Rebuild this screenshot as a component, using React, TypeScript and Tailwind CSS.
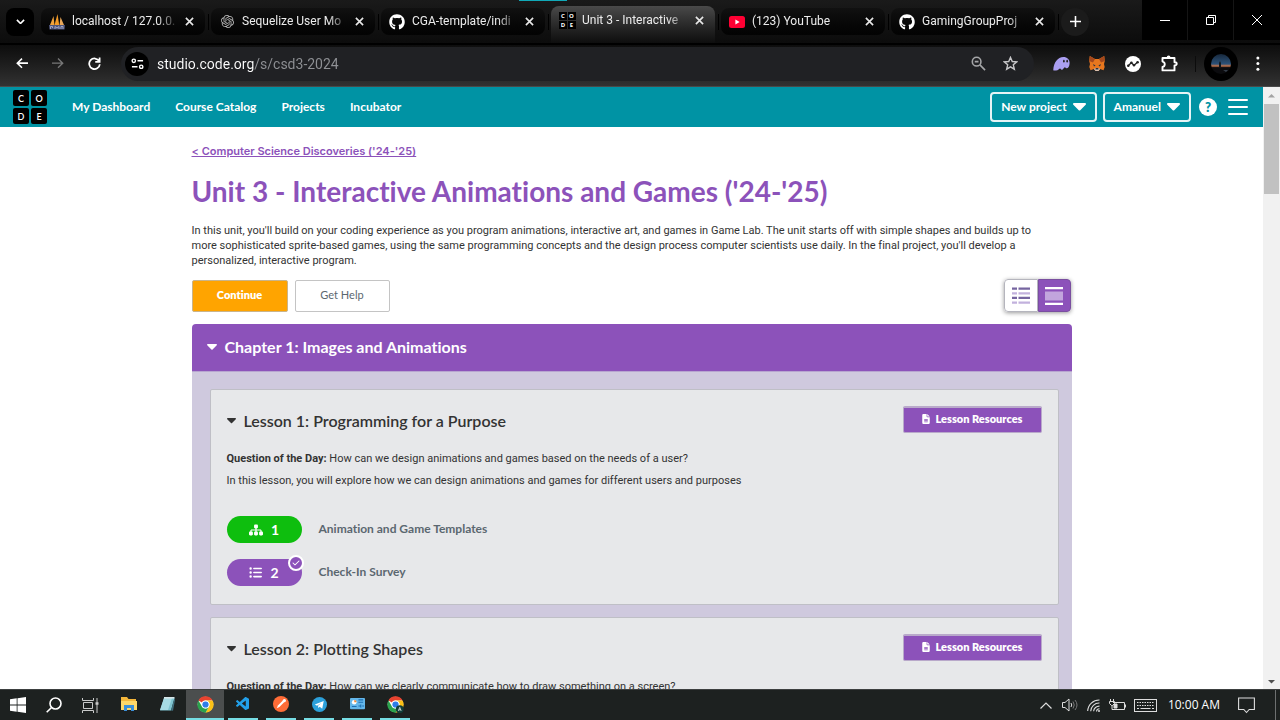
import type { ReactNode } from "react";
import { FaCheck, FaFileLines, FaGithub, FaListUl, FaSitemap } from "react-icons/fa6";
import { SiOpenai } from "react-icons/si";
import { VscVscode } from "react-icons/vsc";

const Caret = ({ className }: { className: string }) => (
  <svg viewBox="0 0 12 7" className={className} fill="currentColor" aria-hidden="true">
    <path d="M1 0h10c.9 0 1.300 1 .7 1.600L6.700 6.600a1 1 0 0 1-1.400 0L.3 1.600C-.3 1 .1 0 1 0z" />
  </svg>
);

const CloseIcon = () => (
  <svg viewBox="0 0 10 10" className="size-[9px]" stroke="#e8e8e8" strokeWidth="1.800" aria-hidden="true">
    <path d="M1 1l8 8M9 1L1 9" />
  </svg>
);

const PhpMyAdminIcon = () => (
  <svg viewBox="0 0 16 16" className="size-4" aria-hidden="true">
    <path d="M1 11L4.500 2l1 9z" fill="#f0a23c" />
    <path d="M5.500 11L8.500 0l1.700 11z" fill="#f39b27" />
    <path d="M10.500 11L11.500 3l3.500 8z" fill="#e9a85a" />
    <path d="M0 11h16l-.5 4.500H.5z" fill="#4e557c" />
    <path d="M1.500 15v-2.500h2V14M6 15v-2.500l2 1.500 2-1.500V15M12 15v-2.500h2V15" fill="none" stroke="#a7adcb" strokeWidth=".9" />
  </svg>
);

const YoutubeIcon = () => (
  <svg viewBox="0 0 16 12" className="h-3 w-4" aria-hidden="true">
    <rect width="16" height="12" rx="2.500" fill="#ff0033" />
    <path d="M6.400 3.500v5l4.200-2.500z" fill="#fff" />
  </svg>
);

const ChromeIcon = ({ badge }: { badge?: boolean }) => (
  <svg viewBox="0 0 48 48" className="size-[17px]" aria-hidden="true">
    <circle cx="24" cy="24" r="22" fill="#fff" />
    <path d="M24 1a23 23 0 0 1 19.900 11.500H24A11.500 11.500 0 0 0 14 18.200L4.100 12.500A23 23 0 0 1 24 1z" fill="#e8432f" />
    <path d="M43.900 12.500A23 23 0 0 1 24 47l10-17.200a11.500 11.500 0 0 0 0-11.600l-10-5.700z" fill="#fbc116" />
    <path d="M4.100 12.500A23 23 0 0 0 24 47l10-17.200A11.500 11.500 0 0 1 14 29.800z" fill="#2ba24c" />
    <circle cx="24" cy="24" r="11" fill="#fff" />
    <circle cx="24" cy="24" r="8.800" fill="#2f7de9" />
    {badge && (
      <>
        <circle cx="36" cy="37" r="11" fill="#123f3a" />
        <path d="M32 42l4-10 4 10M33.500 39h5" stroke="#fff" strokeWidth="2" fill="none" />
      </>
    )}
  </svg>
);

const CodeLogo = ({ small }: { small?: boolean }) => (
  <span className={small ? "grid grid-cols-2 gap-px" : "grid grid-cols-2 gap-[2px]"}>
    {["C", "O", "D", "E"].map((c) => (
      <span
        key={c}
        className={
          small
            ? "flex size-[8px] items-center justify-center bg-black text-[6px] leading-none font-bold text-white"
            : "flex size-4 items-center justify-center rounded-[2px] bg-black text-[9px] leading-none font-semibold text-white"
        }
      >
        {c}
      </span>
    ))}
  </span>
);

const tabs: { title: string; icon: ReactNode; active?: boolean }[] = [
  { title: "localhost / 127.0.0.", icon: <PhpMyAdminIcon /> },
  { title: "Sequelize User Mo", icon: <SiOpenai className="size-[13px] text-[#b9b9b9]" /> },
  { title: "CGA-template/indi", icon: <FaGithub className="size-4 text-white" /> },
  { title: "Unit 3 - Interactive", icon: <CodeLogo small />, active: true },
  { title: "(123) YouTube", icon: <YoutubeIcon /> },
  { title: "GamingGroupProj", icon: <FaGithub className="size-4 text-white" /> },
];

function TabStrip() {
  return (
    <div className="relative flex h-[43px] shrink-0 bg-linear-to-b from-[#1a1a1a] to-[#0c0c0c]">
      <span className="absolute top-0 left-[519px] h-px w-12 bg-[#11a9b8]" />
      <div className="flex min-w-0 flex-1 items-center pl-[6px]">
        <button aria-label="Search tabs" className="mr-[7px] flex h-7 w-7 items-center justify-center rounded-lg bg-black">
          <svg viewBox="0 0 10 6" className="w-[9px]" fill="none" stroke="#fff" strokeWidth="1.800">
            <path d="M1 1l4 4 4-4" />
          </svg>
        </button>
        {tabs.map((t) => (
          <div key={t.title} className="flex w-[170px] min-w-0 items-center">
            <div
              className={
                t.active
                  ? "mt-[6px] flex h-[37px] w-[164px] items-start rounded-t-lg bg-linear-to-b from-[#4a4a4a] to-[#0e0e0e] px-2 pt-[6px]"
                  : "flex h-[27px] w-[164px] items-center rounded-lg bg-linear-to-b from-[#111] to-[#030303] px-2"
              }
            >
              <span className="flex h-[17px] w-4 shrink-0 items-center justify-center">{t.icon}</span>
              <span className="ml-[7px] w-[109px] overflow-hidden mask-r-from-80% mask-r-to-100% font-['Roboto',sans-serif] text-[12px] leading-[17px] whitespace-nowrap text-[#ececec]">
                {t.title}
              </span>
              <button aria-label={"Close " + t.title} className="ml-[2px] flex size-4 shrink-0 items-center justify-center">
                <CloseIcon />
              </button>
            </div>
            <span className="ml-[3px] h-4 w-px bg-black" />
          </div>
        ))}
        <button aria-label="New tab" className="flex size-7 items-center justify-center rounded-full bg-[#1b1b1b]">
          <svg viewBox="0 0 12 12" className="size-[11px]" stroke="#fff" strokeWidth="1.700">
            <path d="M6 0v12M0 6h12" />
          </svg>
        </button>
      </div>
      <div className="flex h-10">
        <button aria-label="Minimize" className="flex w-[46px] items-center justify-center border-r border-[#151515] bg-black">
          <span className="h-px w-[10px] bg-white" />
        </button>
        <button aria-label="Restore" className="flex w-[46px] items-center justify-center border-r border-[#151515] bg-black">
          <svg viewBox="0 0 10 10" className="size-[10px]" fill="none" stroke="#fff">
            <path d="M.5 2.500h7v7h-7zM2.500 2.500v-2h7v7h-2" />
          </svg>
        </button>
        <button aria-label="Close window" className="flex w-[46px] items-center justify-center bg-black">
          <svg viewBox="0 0 10 10" className="size-[10px]" stroke="#fff">
            <path d="M0 0l10 10M10 0L0 10" />
          </svg>
        </button>
      </div>
    </div>
  );
}

const NavButton = ({ label, children }: { label: string; children: ReactNode }) => (
  <button aria-label={label} className="flex size-9 shrink-0 items-center justify-center">
    {children}
  </button>
);

function Toolbar() {
  return (
    <div className="flex h-11 shrink-0 items-center border-t-2 border-b border-t-black border-b-[#4a4a4a] bg-linear-to-b from-[#0d0d0d] to-[#323232] pb-1 pl-1">
      <NavButton label="Back">
        <svg viewBox="0 0 14 12" className="w-3" fill="none" stroke="#fff" strokeWidth="1.800">
          <path d="M7 .7L1.500 6 7 11.300M1.500 6H14" />
        </svg>
      </NavButton>
      <NavButton label="Forward">
        <svg viewBox="0 0 14 12" className="w-3" fill="none" stroke="#777" strokeWidth="1.600">
          <path d="M7 .7L12.500 6 7 11.300M12.500 6H0" />
        </svg>
      </NavButton>
      <NavButton label="Reload">
        <svg viewBox="0 0 14 14" className="size-[13px]" fill="none" stroke="#fff" strokeWidth="1.900">
          <path d="M12 4.500A5.700 5.700 0 1 0 12.700 7.800M12.500 .5v4.700H7.800" />
        </svg>
      </NavButton>
      <div className="ml-[9px] flex h-[34px] min-w-0 flex-1 items-center rounded-full bg-[#202124] pr-4 pl-1">
        <button aria-label="View site information" className="flex size-6 shrink-0 items-center justify-center rounded-full bg-black">
          <svg viewBox="0 0 14 12" className="w-[13px]" fill="none" stroke="#fff" strokeWidth="1.500">
            <circle cx="3" cy="3" r="1.800" />
            <path d="M7 3h6M1 9.500h6" />
            <circle cx="11" cy="9.500" r="1.800" />
          </svg>
        </button>
        <input
          aria-label="Address"
          defaultValue="studio.code.org/s/csd3-2024"
          className="ml-2 h-6 min-w-0 flex-1 bg-[linear-gradient(90deg,#ffffff_97px,#8f9195_97px)] bg-clip-text font-['Roboto',sans-serif] text-[14px] text-transparent outline-none"
        />
        <button aria-label="Zoom" className="mr-4 flex w-4 justify-center">
          <svg viewBox="0 0 16 16" className="size-[15px]" fill="none" stroke="#a5a6a8" strokeWidth="1.700">
            <circle cx="6" cy="6" r="4.600" />
            <path d="M9.500 9.500L15 15M4 6h4" />
          </svg>
        </button>
        <button aria-label="Bookmark this tab" className="flex w-4 justify-center">
          <svg viewBox="0 0 16 16" className="size-[15px]" fill="none" stroke="#c6c6c8" strokeWidth="1.500">
            <path d="M8 1.500l1.900 4.400 4.700.4-3.600 3.100 1.100 4.700L8 11.600l-4.100 2.500L5 9.400 1.400 6.300l4.700-.4z" />
          </svg>
        </button>
      </div>
      <div className="ml-[9px] flex items-center">
        <NavButton label="Phantom">
          <svg viewBox="0 0 18 16" className="w-[17px]">
            <path d="M.3 14.500C.8 7 5 1 11 1c4 0 6.600 2.500 6.600 6.300 0 4-2.300 6.400-3.900 5.500-.8-.5-.7-1-1.200-1-1 0-1.500 2.700-3.300 2.700-1.200 0-1-1.200-1.700-1.200-.9 0-2 2.100-4.300 2.100-1.600 0-3.100.2-2.900-.9z" fill="#ab9ff2" />
            <ellipse cx="11.500" cy="5.500" rx=".9" ry="1.500" fill="#222" />
            <ellipse cx="15" cy="5.500" rx=".9" ry="1.500" fill="#222" />
          </svg>
        </NavButton>
        <NavButton label="MetaMask">
          <svg viewBox="0 0 16 15" className="w-4">
            <path d="M.8 0L6 3h4l5.200-3 .6 5-.8 3 .7 3-1.200 3.300L11 13l-1.500 2h-3L5 13l-3.500 1.300L.3 11 1 8 .2 5z" fill="#e8771e" />
            <path d="M.8 0L6 3 4 6.500.2 5zM15.200 0L10 3l2 3.500L15.800 5z" fill="#a5481c" />
            <path d="M4 8l2.600 1.400L5 10.500zM12 8l-2.600 1.400L11 10.500z" fill="#2b3340" />
            <path d="M5 13l1.500-.9h3L11 13l-1.500 2h-3z" fill="#d7c1b3" />
            <path d="M6.700 12.100h2.600l.3 1.300H6.400z" fill="#2b3340" />
          </svg>
        </NavButton>
        <NavButton label="Metrics extension">
          <svg viewBox="0 0 16 16" className="size-4">
            <circle cx="8" cy="8" r="8" fill="#fff" />
            <path d="M3 10l3.300-3.300L9 9.300 12.800 6" stroke="#222" strokeWidth="1.300" fill="none" />
            <circle cx="3.300" cy="9.800" r="1.300" fill="#222" />
            <circle cx="6.400" cy="6.600" r="1.200" fill="#222" />
            <circle cx="9" cy="9.300" r="1.200" fill="#222" />
            <circle cx="12.600" cy="6.200" r="1.300" fill="#222" />
          </svg>
        </NavButton>
        <NavButton label="Extensions">
          <svg viewBox="0 0 17 17" className="size-[17px]" fill="none" stroke="#fff" strokeWidth="1.900">
            <path d="M1.500 3h12v4.200h.6a1.600 1.600 0 0 1 0 3.200h-.6v5H1.500v-3.500c3-.6 3-4.700 0-5.300z" strokeLinejoin="round" />
            <path d="M5.700 2.500a1.900 1.900 0 0 1 3.800 0z" fill="#fff" stroke="none" />
          </svg>
        </NavButton>
        <span className="mx-[8px] h-4 w-px bg-[#0c0c0c]" />
        <button aria-label="Profile" className="flex size-[34px] items-center justify-center rounded-full bg-black">
          <svg viewBox="0 0 20 20" className="size-5">
            <defs>
              <linearGradient id="sky" x1="0" y1="0" x2="0" y2="1">
                <stop offset="0" stopColor="#17283c" />
                <stop offset=".5" stopColor="#2c5279" />
                <stop offset=".6" stopColor="#c9764b" />
                <stop offset=".68" stopColor="#0b0b0e" />
              </linearGradient>
            </defs>
            <circle cx="10" cy="10" r="10" fill="url(#sky)" />
            <path d="M8 13V9l1-2 1 2v4zM13 16h4l-2 2z" fill="#111820" />
            <path d="M12 16.500h5l-2 1z" fill="#596270" />
          </svg>
        </button>
        <button aria-label="Browser menu" className="mr-3 ml-[10px] flex w-5 justify-center">
          <svg viewBox="0 0 4 16" className="h-[15px]" fill="#fff">
            <circle cx="2" cy="2" r="1.600" />
            <circle cx="2" cy="8" r="1.600" />
            <circle cx="2" cy="14" r="1.600" />
          </svg>
        </button>
      </div>
    </div>
  );
}

function SiteHeader() {
  return (
    <header className="flex h-10 shrink-0 items-center bg-[#0093a4] pr-[15px] pl-[13px] text-[12px] font-bold text-white">
      <a href="#home" aria-label="Code.org home">
        <CodeLogo />
      </a>
      <nav className="ml-[25px] flex gap-[25px] pb-px">
        <a href="#dashboard">My Dashboard</a>
        <a href="#catalog">Course Catalog</a>
        <a href="#projects">Projects</a>
        <a href="#incubator">Incubator</a>
      </nav>
      <div className="ml-auto flex items-center">
        <button className="mr-[6px] flex h-[30px] items-center gap-[6px] rounded-[4px] border-2 border-white/90 px-[9px]">
          New project <Caret className="w-[13px]" />
        </button>
        <button className="mr-2 flex h-[30px] items-center gap-[6px] rounded-[4px] border-2 border-white/90 px-[9px]">
          Amanuel <Caret className="w-[13px]" />
        </button>
        <button aria-label="Help" className="mr-[11px] flex size-[18px] items-center justify-center rounded-full bg-white text-[13px] leading-none font-extrabold text-[#0093a4]">
          ?
        </button>
        <button aria-label="Menu" className="flex w-5 flex-col gap-[5px]">
          <span className="h-[2px] rounded-full bg-white" />
          <span className="h-[2px] rounded-full bg-white" />
          <span className="h-[2px] rounded-full bg-white" />
        </button>
      </div>
    </header>
  );
}

type Level = { n: number; label: string; kind: "green" | "survey" };

function Lesson({ title, question, text, levels }: { title: string; question: string; text?: string; levels: Level[] }) {
  return (
    <section className="rounded-[2px] border border-[#bfbfc6] bg-[#e7e8ea] px-4 pt-4 pb-[18px]">
      <div className="flex h-[30px] items-start justify-between">
        <h3 className="flex h-[30px] items-center text-[16px] font-semibold text-[#333]">
          <Caret className="mr-2 w-[9px]" />
          {title}
        </h3>
        <button className="flex h-[27px] w-[139px] items-center justify-center gap-1 rounded-[2px] border border-t-2 border-[#b9a9ca] bg-[#8c52ba] pb-[2px] text-[11px] font-extrabold text-white">
          <FaFileLines className="size-[10px]" />
          Lesson Resources
        </button>
      </div>
      <div className="mt-3 font-['Roboto',sans-serif] text-[11px] leading-[22px] text-[#333]">
        <p>
          <strong className="font-bold">Question of the Day:</strong> {question}
        </p>
        {text && <p>{text}</p>}
      </div>
      <ul className="mt-6 flex flex-col gap-4">
        {levels.map((l) => (
          <li key={l.n} className="flex items-center">
            <a
              href={"#level-" + l.n}
              className={
                l.kind === "green"
                  ? "relative flex h-[27px] w-[75px] items-center justify-center gap-2 rounded-full bg-[#0ebe0e] text-[14px] font-bold text-white"
                  : "relative flex h-[27px] w-[75px] items-center justify-center gap-2 rounded-full bg-[#8c52ba] text-[14px] font-bold text-white"
              }
            >
              {l.kind === "green" ? <FaSitemap className="size-[14px]" /> : <FaListUl className="size-[13px]" />}
              {l.n}
              {l.kind === "survey" && (
                <span className="absolute -top-1 -right-[2px] flex size-4 items-center justify-center rounded-full border-2 border-white bg-[#8c52ba]">
                  <FaCheck className="size-2" />
                </span>
              )}
            </a>
            <span className="ml-[17px] pb-[2px] text-[12px] font-bold text-[#5b6770]">{l.label}</span>
          </li>
        ))}
      </ul>
    </section>
  );
}

function UnitPage() {
  return (
    <main className="mx-auto w-full max-w-[880px] pt-4 text-[#333]">
      <a href="#course" className="block font-['Inter',sans-serif] text-[11px] leading-4 font-semibold text-[#8c52ba] underline">
        &lt; Computer Science Discoveries ('24-'25)
      </a>
      <h1 className="mt-4 text-[28px] leading-8 font-bold text-[#8c52ba]">Unit 3 - Interactive Animations and Games ('24-'25)</h1>
      <p className="mt-4 font-['Roboto',sans-serif] text-[11px] leading-[15px]">
        In this unit, you'll build on your coding experience as you program animations, interactive art, and games in Game Lab. The unit starts off with simple shapes and builds up to
        <br />
        more sophisticated sprite-based games, using the same programming concepts and the design process computer scientists use daily. In the final project, you'll develop a
        <br />
        personalized, interactive program.
      </p>
      <div className="mt-[11px] flex items-center">
        <button className="h-8 w-24 rounded-[2px] border border-[#c9b48b] bg-[#ffa400] text-[11px] font-extrabold text-white">Continue</button>
        <button className="ml-[7px] h-8 w-[95px] rounded-[2px] border border-[#c4c4c4] bg-white text-[11px] text-[#5b6770]">Get Help</button>
        <div className="mr-px ml-auto flex h-[33px] rounded-[4px] shadow-[0_1px_4px_rgba(0,0,0,0.4)]">
          <button aria-label="Summary view" className="flex w-[34px] items-center justify-center rounded-l-[4px] border border-[#b5b5bd] bg-white">
            <svg viewBox="0 0 18 17" className="w-[18px]">
              <path d="M0 .5h5v2.300H0zM6.500 .5H18v2.300H6.500zM0 9.800h5v2.300H0zM6.500 9.800H18v2.300H6.500z" fill="#7665a0" />
              <path d="M0 5.200h5v2.300H0zM6.500 5.200H18v2.300H6.500zM0 14.500h5v2.300H0zM6.500 14.500H18v2.300H6.500z" fill="#c2b1dd" />
            </svg>
          </button>
          <button aria-label="Detail view" className="flex w-[33px] items-center justify-center rounded-r-[4px] border border-[#7a4fa0] bg-[#8c52ba]">
            <svg viewBox="0 0 18 18" className="w-[18px]">
              <path d="M0 0h18v2.300H0zM0 15.700h18V18H0z" fill="#fff" />
              <path d="M0 4.500h18v9H0z" fill="#c2a5dd" />
            </svg>
          </button>
        </div>
      </div>
      <div className="mt-3">
        <h2 className="flex h-[47px] items-center rounded-t-[4px] bg-[#8c52ba] pb-px pl-[15px] text-[16px] font-bold text-white">
          <Caret className="mr-2 w-[10px]" />
          Chapter 1: Images and Animations
        </h2>
        <div className="flex flex-col gap-3 border-t border-[#b7a5d0] bg-[#cfc9de] pt-[17px] pr-[13px] pb-4 pl-[18px]">
          <Lesson
            title="Lesson 1: Programming for a Purpose"
            question="How can we design animations and games based on the needs of a user?"
            text="In this lesson, you will explore how we can design animations and games for different users and purposes"
            levels={[
              { n: 1, label: "Animation and Game Templates", kind: "green" },
              { n: 2, label: "Check-In Survey", kind: "survey" },
            ]}
          />
          <Lesson title="Lesson 2: Plotting Shapes" question="How can we clearly communicate how to draw something on a screen?" levels={[]} />
        </div>
      </div>
    </main>
  );
}

function ScrollBar() {
  return (
    <div className="flex w-[17px] shrink-0 flex-col items-center bg-[#f1f1f1]" aria-hidden="true">
      <svg viewBox="0 0 17 17" className="size-[17px] shrink-0">
        <path d="M5 10.500h7L8.500 7z" fill="#a3a3a3" />
      </svg>
      <div className="h-[90px] w-[15px] bg-[#c1c1c1]" />
      <svg viewBox="0 0 17 17" className="mt-auto size-[17px] shrink-0">
        <path d="M5 8h7l-3.500 3.500z" fill="#505050" />
      </svg>
    </div>
  );
}

const apps: { name: string; running?: boolean; active?: boolean; icon: ReactNode }[] = [
  {
    name: "File Explorer",
    icon: (
      <svg viewBox="0 0 16 14" className="w-4">
        <path d="M0 0h6l1.500 2H15v11H0z" fill="#f4b73b" />
        <path d="M0 4h16v9H0z" fill="#ffd869" />
        <path d="M3 14V8h10v6h-3v-3H6v3z" fill="#3a8fd9" />
      </svg>
    ),
  },
  {
    name: "Notepad",
    icon: (
      <svg viewBox="0 0 16 14" className="w-4">
        <path d="M5 1h10.500L12 13.500H1z" fill="#7fc4d0" />
        <path d="M5 1h8L9 13H1z" fill="#a7dce4" />
        <path d="M5 0h10.500v1.600H5z" fill="#d6e5e8" />
        <path d="M15.500 1L12 13.500l2 .3L16 3z" fill="#3f6f7d" />
      </svg>
    ),
  },
  { name: "Chrome", active: true, running: true, icon: <ChromeIcon /> },
  { name: "Visual Studio Code", running: true, icon: <VscVscode className="size-4 text-[#22a0ea]" /> },
  {
    name: "Postman",
    running: true,
    icon: (
      <svg viewBox="0 0 16 16" className="size-4">
        <circle cx="8" cy="8" r="8" fill="#ff6c37" />
        <path d="M3.700 12.300l1.200-2.700 5-5 1.500 1.500-5 5z" fill="#fff" />
        <circle cx="11.400" cy="4.600" r="1.600" fill="#fff" />
      </svg>
    ),
  },
  {
    name: "Telegram",
    running: true,
    icon: (
      <svg viewBox="0 0 16 16" className="size-[15px]">
        <circle cx="8" cy="8" r="8" fill="#2ca0da" />
        <path d="M3 8l9.500-3.800-1.600 8.200-2.700-2-1.400 1.400-.4-2.400L10 6.500 5.300 9.200z" fill="#fff" />
      </svg>
    ),
  },
  {
    name: "Control Panel",
    running: true,
    icon: (
      <svg viewBox="0 0 16 12" className="w-[15px]">
        <rect width="16" height="12" rx="1" fill="#64b7ea" />
        <circle cx="4.500" cy="4.500" r="2.500" fill="#fff" />
        <path d="M4.500 4.500V2A2.500 2.500 0 0 1 7 4.500z" fill="#ef8b34" />
        <path d="M9 2h5M9 4.500h5M2 9h5M9 8.500h2M13 8.500h2M11.500 7v3" stroke="#1d6fb2" strokeWidth="1.200" />
      </svg>
    ),
  },
  { name: "Chrome profile A", running: true, icon: <ChromeIcon badge /> },
];

function Taskbar() {
  return (
    <footer className="flex h-[31px] shrink-0 items-stretch border-t border-[#3d4040] bg-[#1d2120]">
      <button aria-label="Start" className="flex w-9 items-center justify-center">
        <svg viewBox="0 0 16 16" className="size-4" fill="#fff">
          <path d="M0 2.300l6.700-1v6.300H0zM7.500 1.200L16 0v7.600H7.500zM0 8.400h6.700v6.300L0 13.700zM7.500 8.400H16V16l-8.500-1.200z" />
        </svg>
      </button>
      <button aria-label="Search" className="flex w-9 items-center justify-center">
        <svg viewBox="0 0 16 16" className="size-4" fill="none" stroke="#fff" strokeWidth="1.600">
          <circle cx="9.500" cy="6.500" r="5.500" />
          <path d="M5.500 10.500L.7 15.300" />
        </svg>
      </button>
      <button aria-label="Task view" className="mr-px flex w-[37px] items-center justify-center">
        <svg viewBox="0 0 17 15" className="w-[17px]" fill="none" stroke="#c9caca">
          <path d="M.5 0v2.500h11V0M.5 15v-2.500h11V15M1.500 4.500h9v6h-9zM15 0v15" />
          <path d="M13.500 5.500h3" strokeWidth="2.500" />
        </svg>
      </button>
      {apps.map((a) => (
        <button
          key={a.name}
          aria-label={a.name}
          className={a.active ? "flex w-[38px] flex-col items-center bg-[#4b4e4e]" : "flex w-[38px] flex-col items-center px-1"}
        >
          <span className="flex flex-1 items-center">{a.icon}</span>
          <span className={a.running ? "h-[2px] w-full bg-[#76dde4]" : "h-[2px] w-full"} />
        </button>
      ))}
      <div className="ml-auto flex items-center text-[#ddd]">
        <svg viewBox="0 0 12 7" className="mr-[10px] w-3" fill="none" stroke="currentColor" strokeWidth="1.200">
          <path d="M.5 6.500L6 1l5.500 5.500" />
        </svg>
        <svg viewBox="0 0 16 14" className="mr-[9px] w-4" fill="none" stroke="currentColor">
          <path d="M.5 4.500h2.500L7 1v12L3 9.500H.5z" />
          <path d="M9 5q1.500 2 0 4" />
          <path d="M11 3.500q2.500 3.500 0 7M13 2q4 5 0 10" stroke="#777" />
        </svg>
        <svg viewBox="0 0 14 13" className="mr-2 w-[14px]" fill="none" stroke="currentColor" strokeWidth="1.100">
          <path d="M.7 12A11.500 11.500 0 0 1 12.500 1M3.700 12.300A8.500 8.500 0 0 1 12.500 4M6.600 12.300a5.700 5.700 0 0 1 5.900-5.200" />
          <path d="M9.500 12.500a3 3 0 0 1 3-2.700" />
          <circle cx="12" cy="12" r="1" fill="currentColor" stroke="none" />
        </svg>
        <svg viewBox="0 0 17 12" className="mr-2 w-[17px]" fill="none" stroke="currentColor">
          <path d="M4 3.500h11.500v7H4M16.500 5.500v3M1.500 0v2.500M4.500 0v2.500M.5 2.500h5v2l-2 2h-1l-2-2zM3 6.500v4h1" />
          <path d="M5 5h3v4H5z" fill="currentColor" />
        </svg>
        <svg viewBox="0 0 23 13" className="mr-[11px] w-[23px]" fill="none" stroke="currentColor">
          <rect x=".5" y=".5" width="22" height="12" />
          <path d="M3 3.500h17M3 6.500h17" strokeDasharray="1.500 1" />
          <path d="M3 9.500h2M6.500 9.500h10M18 9.500h2" />
        </svg>
        <time className="text-[12px] whitespace-nowrap text-white">10:00 AM</time>
        <svg viewBox="0 0 17 17" className="mr-5 ml-[18px] w-[17px]" fill="none" stroke="currentColor" strokeWidth="1.100">
          <path d="M.6 1h15.800v11.500h-5.200L8.500 15.500l-2.700-3H.6z" />
        </svg>
        <span className="mr-1 h-full w-px bg-[#6d7070]" />
      </div>
    </footer>
  );
}

export default function App() {
  return (
    <div className="flex h-screen flex-col overflow-hidden bg-black font-['Open_Sans',sans-serif]">
      <TabStrip />
      <Toolbar />
      <div className="flex min-h-0 flex-1 overflow-hidden bg-white font-['Lato',sans-serif] [font-variant-ligatures:none]">
        <div className="flex min-w-0 flex-1 flex-col overflow-hidden">
          <SiteHeader />
          <UnitPage />
        </div>
        <ScrollBar />
      </div>
      <Taskbar />
    </div>
  );
}
